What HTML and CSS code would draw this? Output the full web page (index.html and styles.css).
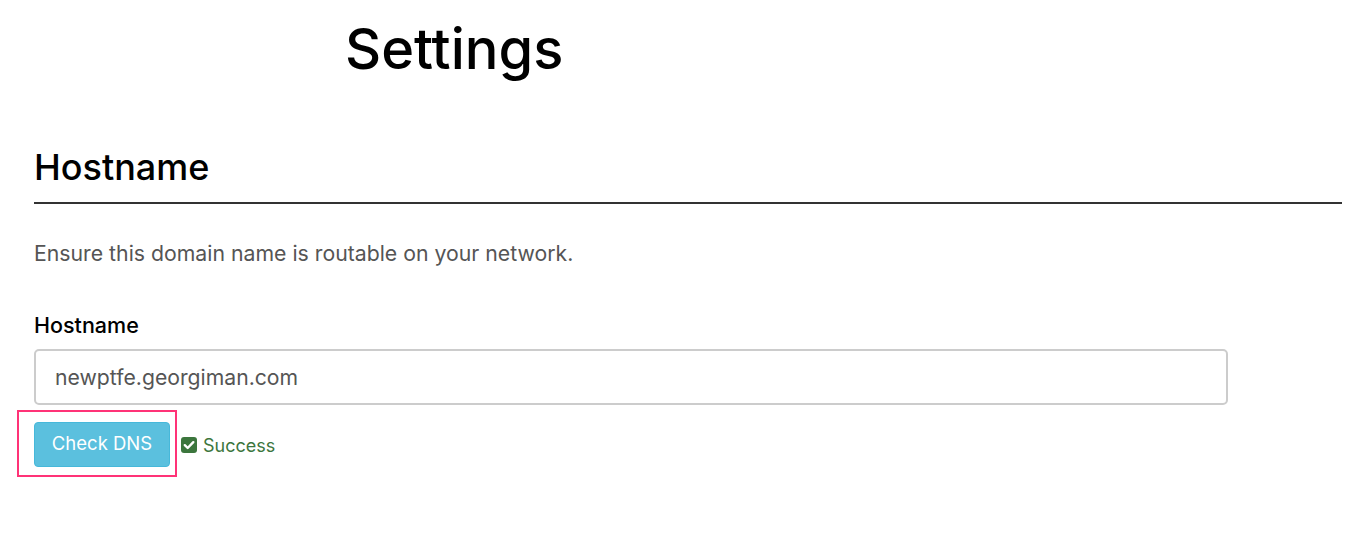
FILE: index.html
```html
<!DOCTYPE html>
<html>
<head>
<meta charset="utf-8">
<link rel="stylesheet" href="styles.css">
</head>
<body>
<div class="page">
  <h1 class="title">Settings</h1>
  <section class="section">
    <h2 class="section-title">Hostname</h2>
    <p class="help">Ensure this domain name is routable on your network.</p>
    <div class="field">
      <label class="label" for="host">Hostname</label>
      <input class="input" id="host" type="text" value="newptfe.georgiman.com">
    </div>
    <div class="actions">
      <div class="highlight">
        <button class="btn">Check DNS</button>
      </div>
      <span class="status">
        <svg class="check" viewBox="0 0 16 16" width="16" height="16">
          <rect x="0" y="0" width="16" height="16" rx="3" fill="#3c763d"/>
          <path d="M3.8 8.2 L6.7 11 L12.3 5.2" fill="none" stroke="#fff" stroke-width="2.4" stroke-linecap="round" stroke-linejoin="round"/>
        </svg>
        Success
      </span>
    </div>
  </section>
</div>
</body>
</html>
```
FILE: styles.css
```css
* { box-sizing: border-box; }
html, body { margin: 0; padding: 0; background: #fff; }
body { font-family: Inter, "Liberation Sans", Arial, sans-serif; color: #000; }
.page { padding: 0 22px 0 34px; }
.title {
  margin: 0;
  padding: 14px 0 0 311px;
  font-size: 56px;
  font-weight: 500;
  line-height: 70px;
}
.section { margin-top: 61px; }
.section-title {
  margin: 0;
  font-size: 36px;
  font-weight: 500;
  line-height: 44px;
  padding-bottom: 13px;
  border-bottom: 2px solid #333;
}
.help {
  margin: 35px 0 0;
  font-size: 21.25px;
  line-height: 28px;
  color: #555;
}
.field { margin-top: 45px; }
.label {
  display: block;
  font-size: 21.5px;
  line-height: 26px;
  font-weight: 500;
  color: #000;
}
.input {
  display: block;
  margin-top: 11px;
  width: 1194px;
  height: 56px;
  padding: 0 19px;
  border: 2px solid #ccc;
  border-radius: 5px;
  font-family: inherit;
  font-size: 21.2px;
  color: #555;
  outline: none;
}
.actions { display: flex; align-items: center; margin-top: 5px; margin-left: -17px; }
.highlight {
  border: 2px solid #ff3377;
  padding: 10px 5px 8px 15px;
}
.btn {
  display: block;
  width: 136px;
  height: 45px;
  background: #5bc0de;
  border: 1px solid #46b8da;
  border-radius: 4px;
  color: #fff;
  font-family: inherit;
  font-size: 18.5px;
  padding: 0 0 3px;
}
.status {
  display: flex;
  align-items: center;
  gap: 6px;
  margin-left: 4px;
  padding-top: 3px;
  font-size: 18px;
  color: #3c763d;
}
.check { display: block; }
```
